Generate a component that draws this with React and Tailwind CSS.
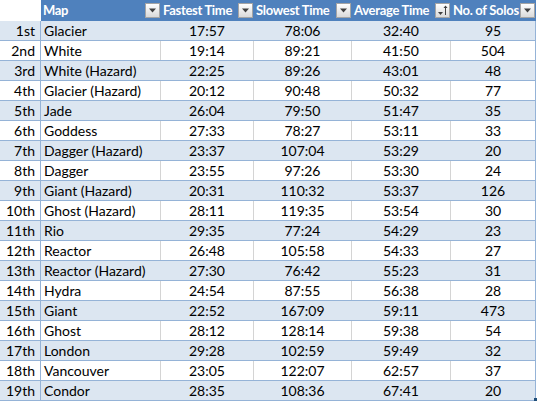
import React from 'react'

const rows = [
  ['1st', 'Glacier', '17:57', '78:06', '32:40', '95'],
  ['2nd', 'White', '19:14', '89:21', '41:50', '504'],
  ['3rd', 'White (Hazard)', '22:25', '89:26', '43:01', '48'],
  ['4th', 'Glacier (Hazard)', '20:12', '90:48', '50:32', '77'],
  ['5th', 'Jade', '26:04', '79:50', '51:47', '35'],
  ['6th', 'Goddess', '27:33', '78:27', '53:11', '33'],
  ['7th', 'Dagger (Hazard)', '23:37', '107:04', '53:29', '20'],
  ['8th', 'Dagger', '23:55', '97:26', '53:30', '24'],
  ['9th', 'Giant (Hazard)', '20:31', '110:32', '53:37', '126'],
  ['10th', 'Ghost (Hazard)', '28:11', '119:35', '53:54', '30'],
  ['11th', 'Rio', '29:35', '77:24', '54:29', '23'],
  ['12th', 'Reactor', '26:48', '105:58', '54:33', '27'],
  ['13th', 'Reactor (Hazard)', '27:30', '76:42', '55:23', '31'],
  ['14th', 'Hydra', '24:54', '87:55', '56:38', '28'],
  ['15th', 'Giant', '22:52', '167:09', '59:11', '473'],
  ['16th', 'Ghost', '28:12', '128:14', '59:38', '54'],
  ['17th', 'London', '29:28', '102:59', '59:49', '32'],
  ['18th', 'Vancouver', '23:05', '122:07', '62:57', '37'],
  ['19th', 'Condor', '28:35', '108:36', '67:41', '20'],
]

const FilterButton = ({ sorted }) => (
  <div className="w-[15px] h-[15px] shrink-0 border border-[#a5a5a5] bg-gradient-to-b from-[#ffffff] to-[#dadada] flex items-center justify-center">
    {sorted ? (
      <svg width="13" height="13" viewBox="0 0 13 13">
        <path d="M2 8h5l-2.5 3z" fill="#404040" />
        <path d="M9.5 2v9" stroke="#404040" strokeWidth="1" />
        <path d="M7.5 4l2-2.5 2 2.5z" fill="#404040" />
      </svg>
    ) : (
      <svg width="9" height="5" viewBox="0 0 9 5">
        <path d="M1 0.5h7l-3.5 4z" fill="#404040" />
      </svg>
    )}
  </div>
)

const HeaderCell = ({ label, w, sorted }) => (
  <div className={`${w} h-full flex items-center justify-between pl-[2px] pr-[1px]`}>
    <span className="font-bold text-white text-[13px] tracking-[-0.3px] whitespace-nowrap">{label}</span>
    <FilterButton sorted={sorted} />
  </div>
)

const App = () => {
  return (
    <div className="w-[537px] h-[401px] bg-white overflow-hidden" style={{ fontFamily: 'Lato, "Open Sans", sans-serif' }}>
      {/* Header */}
      <div className="flex h-[21px]">
        <div className="w-[41px] h-full bg-white" />
        <div className="flex h-full bg-[#4f81bd]">
          <HeaderCell label="Map" w="w-[120px]" />
          <HeaderCell label="Fastest Time" w="w-[93px]" />
          <HeaderCell label="Slowest Time" w="w-[98px]" />
          <HeaderCell label="Average Time" w="w-[99px]" sorted />
          <HeaderCell label="No. of Solos" w="w-[85px]" />
        </div>
      </div>

      {/* Rows */}
      {rows.map((r, i) => {
        const banded = i % 2 === 0
        const sep = banded ? 'border-r border-[#dce6f1]' : 'border-r border-[#d4d4d4]'
        return (
          <div
            key={r[0]}
            className={`flex w-[536px] h-[20px] border-b border-[#95b3d7] text-[14px] leading-[19px] text-black ${banded ? 'bg-[#dce6f1]' : 'bg-white'}`}
          >
            <div className="w-[41px] border-r border-[#95b3d7] text-right pr-[5px]">{r[0]}</div>
            <div className={`w-[120px] pl-[3px] whitespace-nowrap ${sep}`}>{r[1]}</div>
            <div className={`w-[93px] text-center ${sep}`}>{r[2]}</div>
            <div className={`w-[98px] text-center ${sep}`}>{r[3]}</div>
            <div className={`w-[99px] text-center ${sep}`}>{r[4]}</div>
            <div className="w-[85px] text-center border-r border-[#95b3d7] relative">
              {r[5]}
              {i === rows.length - 1 && (
                <div className="absolute right-[-2px] bottom-[-1px] w-[3px] h-[3px] bg-[#1f4e79]" />
              )}
            </div>
          </div>
        )
      })}
    </div>
  )
}

export default App
